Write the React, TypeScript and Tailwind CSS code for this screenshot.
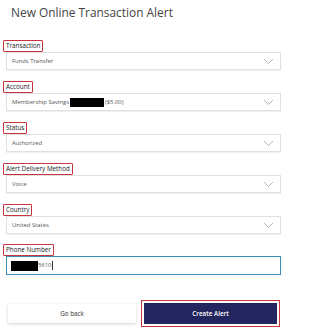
import React from "react";

const Chevron = () => (
  <svg width="11" height="7" viewBox="0 0 11 7" className="shrink-0">
    <path d="M1 1 L5.5 5.5 L10 1" fill="none" stroke="#b5b5b5" strokeWidth="1" />
  </svg>
);

const Label = ({ children }: { children: React.ReactNode }) => (
  <div className="flex">
    <div className="h-[12px] border-[1.5px] border-[#c9343f] rounded-[1px] px-[2px] flex items-center text-[6.3px] text-[#222] leading-none">
      {children}
    </div>
  </div>
);

const Select = ({ children }: { children: React.ReactNode }) => (
  <div className="ml-[3px] mr-[4px] h-[18px] border border-[#e0e0e0] bg-white shadow-[0_1px_1px_rgba(0,0,0,0.06)] flex items-center pl-[5px] pr-[6px] text-[5.9px] text-[#555]">
    <div className="flex-1 flex items-center">{children}</div>
    <Chevron />
  </div>
);

export default function App() {
  return (
    <div
      className="w-[285px] h-[330px] bg-white overflow-hidden"
      style={{ fontFamily: '"Open Sans", sans-serif' }}
    >
      <div className="pl-[11px] pt-[2px] text-[11.9px] text-[#444] leading-[20px]">
        New Online Transaction Alert
      </div>
      <div className="pl-[3px] pt-[18px] flex flex-col gap-[11px]">
        <div>
          <Label>Transaction</Label>
          <Select>Funds Transfer</Select>
        </div>
        <div>
          <Label>Account</Label>
          <Select>
            <span>Membership Savings</span>
            <span className="inline-block w-[34px] h-[9px] bg-black mx-[1px]" />
            <span>($5.00)</span>
          </Select>
        </div>
        <div>
          <Label>Status</Label>
          <Select>Authorized</Select>
        </div>
        <div>
          <Label>Alert Delivery Method</Label>
          <Select>Voice</Select>
        </div>
        <div>
          <Label>Country</Label>
          <Select>United States</Select>
        </div>
        <div className="-mt-[1px]">
          <Label>Phone Number</Label>
          <div className="ml-[3px] mr-[4px] h-[19px] border-[1.5px] border-[#3c8fb8] bg-white flex items-center pl-[4px] text-[5.9px] text-[#555]">
            <span className="inline-block w-[27px] h-[10px] bg-black" />
            <span>5610</span>
            <span className="inline-block w-[0.5px] h-[9px] bg-[#333] ml-[1px]" />
          </div>
        </div>
      </div>
      <div className="mt-[25px] pl-[8px] pr-[5px] flex items-center gap-[5px]">
        <div className="w-[128px] h-[19px] bg-white shadow-[0_1px_3px_rgba(0,0,0,0.18)] flex items-center justify-center text-[6.3px] text-[#333]">
          Go back
        </div>
        <div className="flex-1 border-[1.5px] border-[#c9343f] p-[2px]">
          <div className="h-[21px] bg-[#23265e] flex items-center justify-center text-[6.3px] font-semibold text-white">
            Create Alert
          </div>
        </div>
      </div>
    </div>
  );
}
